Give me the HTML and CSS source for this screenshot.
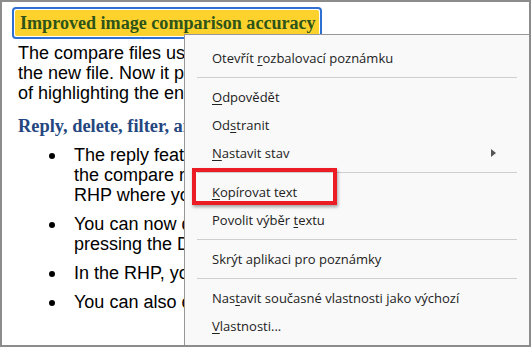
FILE: index.html
```html
<!DOCTYPE html>
<html lang="en">
  <head>
    <meta charset="UTF-8" />
    <title>Compare report menu</title>
    <link rel="stylesheet" href="styles.css">
  </head>
  <body>
    <div class="frame">
      <div class="doc">
        <div class="title-box">
          <h1>Improved image comparison accuracy</h1>
        </div>
        <p class="intro">
          The compare files used to highlight the whole image if anything changed in<br>
          the new file. Now it precisely highlights the changed area of the image instead<br>
          of highlighting the entire image.
        </p>
        <h2>Reply, delete, filter, and set status of comments</h2>
        <ul class="points">
          <li>The reply feature is now available for comments in<br>the compare report. Replies are shown in the<br>RHP where you can read and edit them.</li>
          <li>You can now delete a comment by selecting it and<br>pressing the Delete key.</li>
          <li>In the RHP, you can filter comments by type.</li>
          <li>You can also change the status of a comment.</li>
        </ul>
      </div>

      <div class="menu">
        <div class="item">Otevřít <u>r</u>ozbalovací poznámku</div>
        <div class="sep"></div>
        <div class="item"><u>O</u>dpovědět</div>
        <div class="item">Od<u>s</u>tranit</div>
        <div class="item has-sub"><u>N</u>astavit stav</div>
        <div class="sep"></div>
        <div class="item"><u>K</u>opírovat text</div>
        <div class="item">Povolit výběr <u>t</u>extu</div>
        <div class="sep"></div>
        <div class="item">Skrýt aplikaci pro poznámky</div>
        <div class="sep"></div>
        <div class="item">Nas<u>t</u>avit současné vlastnosti jako výchozí</div>
        <div class="item"><u>V</u>lastnosti...</div>
      </div>

      <div class="callout"></div>
    </div>
  </body>
</html>
```

FILE: styles.css
```css
body {
  margin: 0;
  background-color: #ffffff;
}
.frame {
  position: relative;
  width: 531px;
  height: 347px;
  box-sizing: border-box;
  border: 2px solid #8c8c8c;
  overflow: hidden;
}
.doc {
  padding: 5px 0 0 10px;
  font-family: "Liberation Sans", Arial, sans-serif;
  font-size: 18px;
  line-height: 20px;
  color: #000000;
  white-space: nowrap;
}
.title-box {
  display: inline-block;
  border: 2px solid #2f6fd0;
  border-radius: 4px;
  padding: 1px;
  background-color: #ffffff;
}
h1 {
  margin: 0;
  padding: 2px 3px 2px 5px;
  background-color: #fdd22c;
  border-radius: 2px;
  font-family: "Liberation Serif", "Times New Roman", serif;
  font-size: 18.1px;
  line-height: 22px;
  font-weight: bold;
  color: #2e5419;
}
.intro {
  margin: 4px 0 0 6px;
}
h2 {
  margin: 12px 0 0 6px;
  font-family: "Liberation Serif", "Times New Roman", serif;
  font-size: 18.4px;
  line-height: 22px;
  font-weight: bold;
  color: #25467f;
}
.points {
  list-style: none;
  margin: 8px 0 0 0;
  padding-left: 62px;
}
.points li {
  position: relative;
  margin-bottom: 9px;
}
.points li::before {
  content: "";
  position: absolute;
  left: -25px;
  top: 8px;
  width: 6px;
  height: 6px;
  border-radius: 50%;
  background-color: #000000;
}
.menu {
  position: absolute;
  left: 182px;
  top: 32px;
  right: 0;
  bottom: 0;
  box-sizing: border-box;
  padding: 9px 0 0 0;
  background-color: #f9f9f9;
  border: 1px solid #979797;
  border-right: none;
  border-bottom: none;
  font-family: "Open Sans", "Noto Sans", sans-serif;
  font-size: 13px;
  color: #222222;
}
.item {
  position: relative;
  height: 28px;
  line-height: 28px;
  padding-left: 27px;
}
.item u {
  text-underline-offset: 2px;
}
.has-sub::after {
  content: "";
  position: absolute;
  right: 33px;
  top: 10px;
  border-top: 4px solid transparent;
  border-bottom: 4px solid transparent;
  border-left: 5px solid #555555;
}
.sep {
  height: 1px;
  margin: 5px 12px 5px 12px;
  background-color: #cfcfcf;
}
.callout {
  position: absolute;
  left: 190px;
  top: 166px;
  width: 145px;
  height: 37px;
  box-sizing: border-box;
  border: 4px solid #ec1c24;
  box-shadow: 1px 2px 3px rgba(0, 0, 0, 0.35);
}
```
